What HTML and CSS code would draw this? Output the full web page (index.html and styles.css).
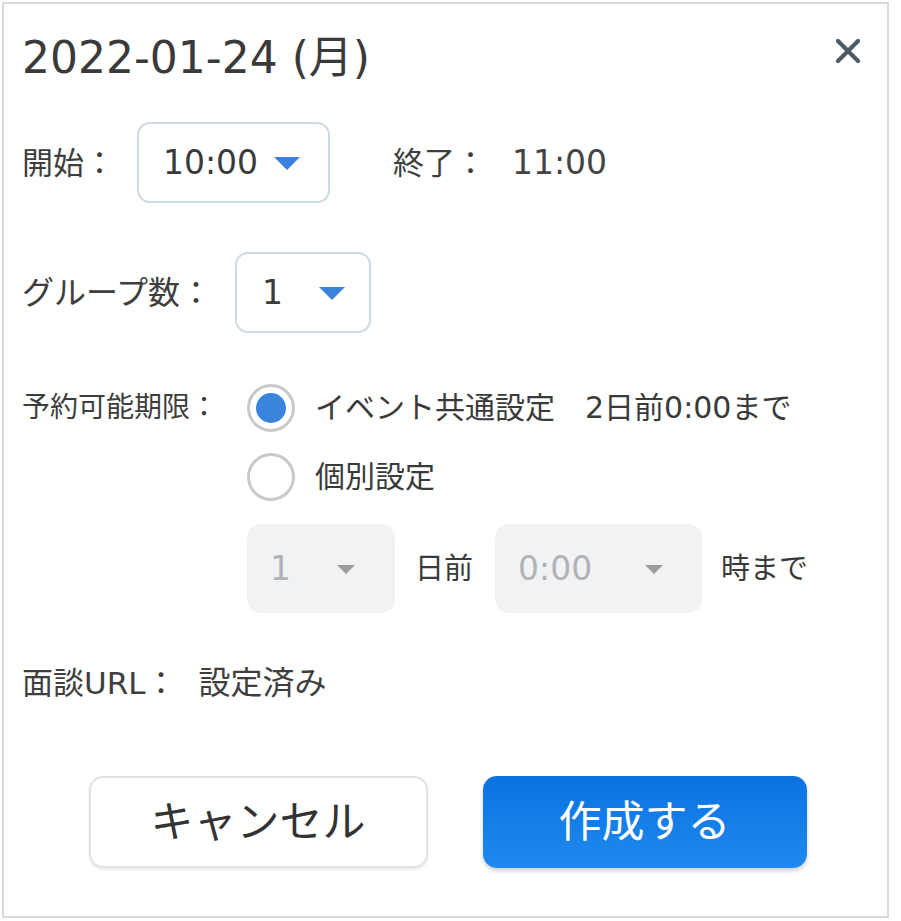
FILE: index.html
```html
<!DOCTYPE html>
<html lang="ja">
<head>
<meta charset="utf-8">
<title>予約枠作成</title>
<link rel="stylesheet" href="styles.css">
</head>
<body>
<div class="panel">
  <div class="header">
    <div class="title">2022-01-24 (月)</div>
    <button class="close" aria-label="閉じる">
      <svg width="26" height="26" viewBox="0 0 26 26"><path d="M3 3 L23 23 M23 3 L3 23" stroke="#4c5a66" stroke-width="4.2" stroke-linecap="round" fill="none"/></svg>
    </button>
  </div>

  <div class="row row-time">
    <span class="label label-start">開始：</span>
    <div class="select select-start"><span class="val">10:00</span><span class="tri"></span></div>
    <span class="label label-end">終了：</span>
    <span class="val end-val">11:00</span>
  </div>

  <div class="row row-group">
    <span class="label label-group">グループ数：</span>
    <div class="select select-group"><span class="val">1</span><span class="tri"></span></div>
  </div>

  <div class="row row-deadline">
    <span class="label label-deadline">予約可能期限：</span>
    <div class="options">
      <div class="option">
        <span class="radio checked"><span class="dot"></span></span>
        <span class="opt-text">イベント共通設定　2日前0:00まで</span>
      </div>
      <div class="option option-2">
        <span class="radio"></span>
        <span class="opt-text">個別設定</span>
      </div>
      <div class="custom">
        <div class="dselect dselect-day"><span class="dval">1</span><span class="dtri"></span></div>
        <span class="unit unit-day">日前</span>
        <div class="dselect dselect-time"><span class="dval">0:00</span><span class="dtri"></span></div>
        <span class="unit unit-time">時まで</span>
      </div>
    </div>
  </div>

  <div class="row row-url">
    <span class="label">面談URL：</span><span class="url-val">設定済み</span>
  </div>

  <div class="buttons">
    <button class="btn btn-cancel">キャンセル</button>
    <button class="btn btn-create">作成する</button>
  </div>
</div>
</body>
</html>
```

FILE: styles.css
```css
html, body {
  margin: 0;
  padding: 0;
  background: #ffffff;
}

body {
  font-family: "DejaVu Sans", "Noto Sans CJK JP", sans-serif;
  color: #3a3a3a;
}

.panel {
  box-sizing: border-box;
  width: 887px;
  height: 916px;
  margin: 2px;
  border: 2px solid #dadada;
  padding: 29px 18px 0 18px;
  background: #ffffff;
}

.header {
  display: flex;
  justify-content: space-between;
  align-items: flex-start;
  height: 50px;
}

.title {
  font-size: 44px;
  line-height: 50px;
  color: #3a3a3a;
}

.close {
  border: none;
  background: none;
  padding: 0;
  margin: 5px 8px 0 0;
  width: 26px;
  height: 26px;
  display: flex;
}

.row {
  display: flex;
  align-items: center;
}

.label {
  font-size: 30px;
  line-height: 40px;
  color: #3e3e3e;
  white-space: nowrap;
}

.row-time {
  margin-top: 39px;
  height: 81px;
}

.label-start {
  width: 115px;
  font-size: 31px;
}

.select {
  box-sizing: border-box;
  height: 81px;
  border: 2px solid #cfd9e4;
  border-radius: 13px;
  display: flex;
  align-items: center;
  justify-content: space-between;
  background: #fff;
}

.val {
  font-size: 33px;
  line-height: 40px;
  color: #3a3a3a;
}

.tri {
  width: 0;
  height: 0;
  border-left: 13px solid transparent;
  border-right: 13px solid transparent;
  border-top: 13px solid #3b82dc;
  margin-top: 2px;
}

.select-start {
  width: 193px;
  padding: 0 28px 0 24px;
}

.label-end {
  margin-left: 63px;
  width: 119px;
  font-size: 31px;
}

.end-val {
  color: #444;
}

.row-group {
  margin-top: 49px;
  height: 81px;
}

.label-group {
  width: 213px;
  font-size: 32px;
}

.select-group {
  width: 136px;
  padding: 0 24px 0 25px;
}

.row-deadline {
  margin-top: 51px;
  align-items: flex-start;
}

.label-deadline {
  width: 225px;
  font-size: 28px;
  line-height: 48px;
}

.options {
  display: flex;
  flex-direction: column;
}

.option {
  display: flex;
  align-items: center;
  height: 48px;
}

.option-2 {
  margin-top: 21px;
}

.radio {
  box-sizing: border-box;
  width: 48px;
  height: 48px;
  border-radius: 50%;
  border: 3px solid #c9c9c9;
  display: flex;
  align-items: center;
  justify-content: center;
  background: #fff;
}

.dot {
  width: 30px;
  height: 30px;
  border-radius: 50%;
  background: #3b84de;
}

.opt-text {
  margin-left: 20px;
  font-size: 30px;
  line-height: 40px;
  color: #3a3a3a;
  white-space: nowrap;
}

.custom {
  margin-top: 23px;
  display: flex;
  align-items: center;
  height: 89px;
}

.dselect {
  box-sizing: border-box;
  height: 89px;
  border-radius: 14px;
  background: #f1f2f4;
  display: flex;
  align-items: center;
  justify-content: space-between;
}

.dselect-day {
  width: 148px;
  padding: 0 40px 0 23px;
}

.dselect-time {
  width: 207px;
  padding: 0 39px 0 23px;
}

.dval {
  font-size: 33px;
  line-height: 40px;
  color: #b0b2b5;
}

.dtri {
  width: 0;
  height: 0;
  border-left: 9px solid transparent;
  border-right: 9px solid transparent;
  border-top: 9px solid #9c9c9c;
  margin-top: 2px;
}

.unit {
  font-size: 29px;
  line-height: 40px;
  color: #3a3a3a;
}

.unit-day {
  margin: 0 22px 0 20px;
}

.unit-time {
  margin-left: 19px;
}

.row-url {
  margin-top: 50px;
  height: 40px;
}

.row-url .label {
  font-size: 31px;
}

.url-val {
  margin-left: 22px;
  font-size: 32px;
  line-height: 40px;
  color: #3e3e3e;
}

.buttons {
  margin-top: 73px;
  display: flex;
  justify-content: center;
  gap: 55px;
  padding-left: 4px;
}

.btn {
  box-sizing: border-box;
  height: 92px;
  border-radius: 14px;
  font-family: "DejaVu Sans", "Noto Sans CJK JP", sans-serif;
  font-size: 43px;
  line-height: 48px;
  cursor: pointer;
}

.btn-cancel {
  width: 339px;
  background: #ffffff;
  border: 2px solid #e2e2e2;
  color: #333333;
  box-shadow: 0 2px 3px rgba(0, 0, 0, 0.08);
}

.btn-create {
  width: 324px;
  border: none;
  color: #ffffff;
  background: linear-gradient(#0b72e0, #2089ee);
  box-shadow: 0 3px 4px rgba(0, 0, 0, 0.18);
}
```
